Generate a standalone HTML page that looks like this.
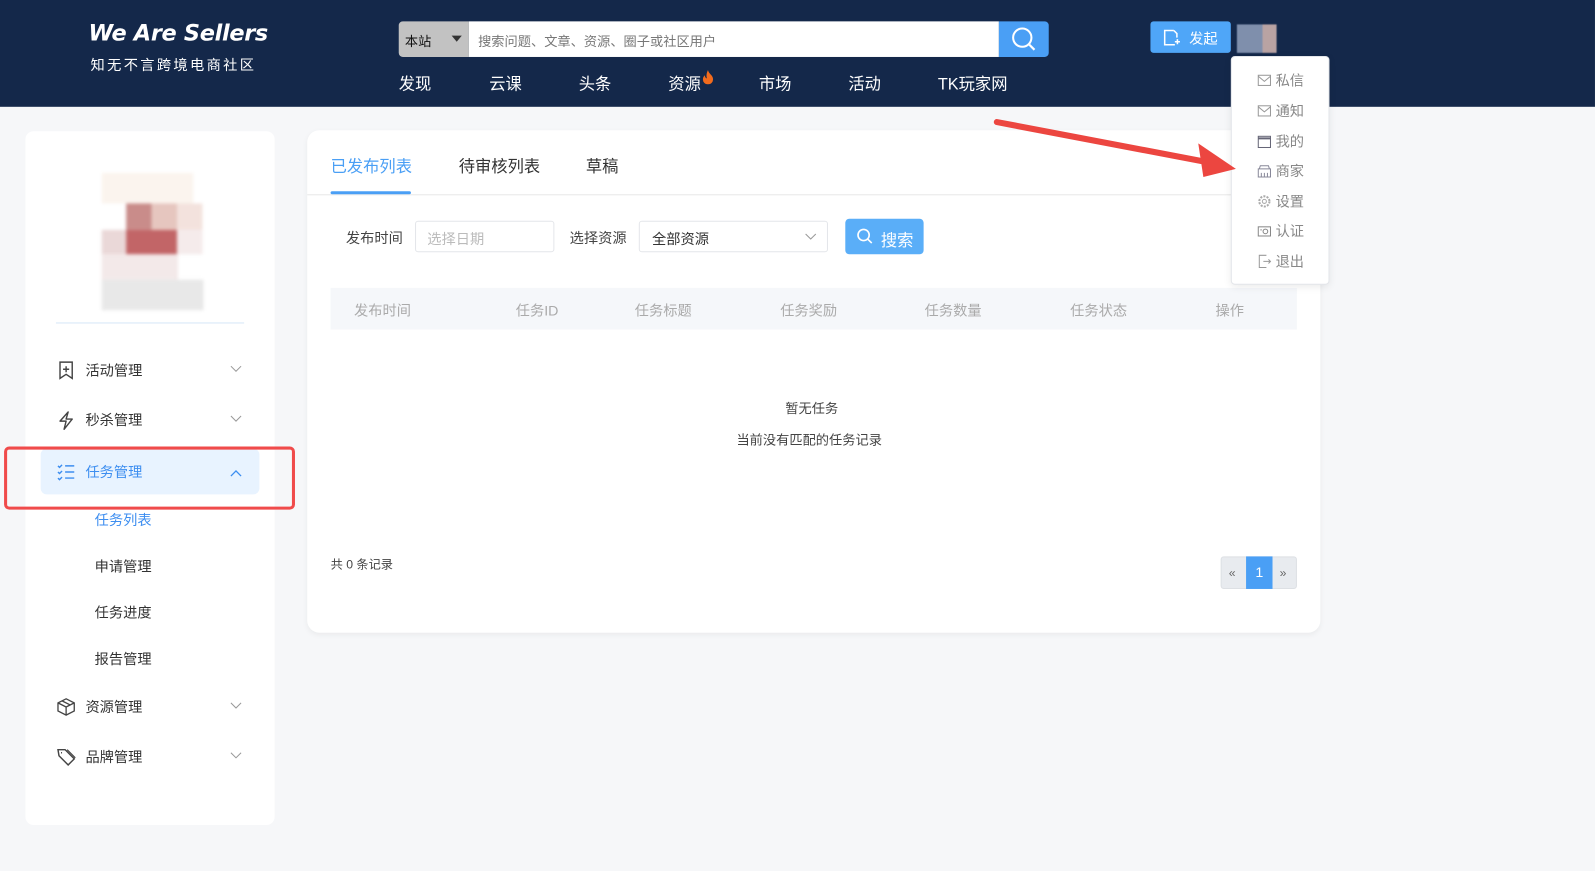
<!DOCTYPE html>
<html><head><meta charset="utf-8">
<style>
*{margin:0;padding:0;box-sizing:border-box}
html,body{width:1595px;height:871px;overflow:hidden;background:#f6f7f9}
body{font-family:"Liberation Sans","Noto Sans CJK SC",sans-serif;color:#333}
#w{position:absolute;left:0;top:0;width:1568px;height:856px;transform:scale(1.0172);transform-origin:0 0;background:#f6f7f9}
.a{position:absolute;white-space:nowrap}
.hdr{position:absolute;left:0;top:0;width:1568px;height:105px;background:#14284a}
.nav{font-size:16px;color:#fff;top:69px}
.dd{position:absolute;left:1210px;top:55px;width:97px;height:225px;background:#fff;border:1px solid #e4e6ea;border-radius:4px;box-shadow:0 2px 8px rgba(0,0,0,.08)}
.di{position:absolute;left:25px;font-size:14px;color:#888;display:flex;align-items:center;gap:4px}
.di svg{width:14px;height:14px}
.card{position:absolute;background:#fff}
.mi{position:absolute;left:55px;font-size:14px;color:#333;display:flex;align-items:center}
.mi svg{width:20px;height:20px;margin-right:9px}
.chev{position:absolute;left:226px;width:12px;height:12px}
.sub{position:absolute;left:93px;font-size:14px;color:#333}
.th{position:absolute;top:295px;font-size:14px;color:#aaa}
</style></head><body><div id="w">
<div class="hdr"></div>
<div class="a" style="left:87px;top:21px;font-family:'DejaVu Sans',sans-serif;font-style:italic;font-weight:bold;font-size:22px;color:#fff;letter-spacing:-0.3px">We Are Sellers</div>
<div class="a" style="left:89px;top:54px;font-size:14px;color:#fff;letter-spacing:2.3px">知无不言跨境电商社区</div>
<div class="a" style="left:392px;top:21px;width:69px;height:35px;background:#c2c2c2;border-radius:4px 0 0 4px;font-size:13px;color:#111;padding:9px 0 0 6px">本站<span style="position:absolute;left:52px;top:14px;border:5px solid transparent;border-top:6px solid #333;border-bottom:0"></span></div>
<div class="a" style="left:461px;top:21px;width:521px;height:35px;background:#fff;font-size:13px;color:#777;padding:9px 0 0 9px">搜索问题、文章、资源、圈子或社区用户</div>
<div class="a" style="left:982px;top:21px;width:49px;height:35px;background:#4a9ff5;border-radius:0 4px 4px 0"><svg width="49" height="35"><circle cx="23" cy="16" r="9" fill="none" stroke="#fff" stroke-width="2"/><line x1="30" y1="23" x2="35" y2="28" stroke="#fff" stroke-width="2.2"/></svg></div>
<div class="a nav" style="left:392px">发现</div><div class="a nav" style="left:481px">云课</div><div class="a nav" style="left:569px">头条</div>
<div class="a nav" style="left:657px">资源<svg width="12" height="14" style="position:absolute;left:33px;top:0"><path d="M6 0C7 4 11 5 11 9a5 5 0 0 1-10 0c0-2 1-3 2-4 0 2 1 3 2 3C4 5 5 2 6 0z" fill="#f26b1d"/></svg></div>
<div class="a nav" style="left:746px">市场</div><div class="a nav" style="left:834px">活动</div><div class="a nav" style="left:922px">TK玩家网</div>
<div class="a" style="left:1131px;top:21px;width:79px;height:31px;background:#4fa6f8;border-radius:3px;color:#fff;font-size:14px;padding:7px 0 0 38px">发起<svg width="18" height="18" style="position:absolute;left:12px;top:7px"><path d="M11 2H2v14h10" fill="none" stroke="#fff" stroke-width="1.5"/><path d="M11 2l3 3v4M12 13h5M14.5 10.5v5" fill="none" stroke="#fff" stroke-width="1.5"/></svg></div>
<div class="a" style="left:1216px;top:24px;width:39px;height:28px;background:linear-gradient(90deg,#7f8fac 0,#7f8fac 65%,#b9a3a3 65%);filter:blur(.5px)"></div>

<div class="card" style="left:25px;top:129px;width:245px;height:682px;border-radius:8px"></div>
<div class="a" style="left:80px;top:170px;width:155px;height:145px;filter:blur(1.5px)">
<div class="a" style="left:20px;top:0;width:90px;height:30px;background:#fbf4ee"></div>
<div class="a" style="left:44px;top:30px;width:25px;height:26px;background:#c98c8a"></div>
<div class="a" style="left:69px;top:30px;width:25px;height:26px;background:#e6c6bf"></div>
<div class="a" style="left:94px;top:30px;width:25px;height:26px;background:#f3e2dd"></div>
<div class="a" style="left:20px;top:56px;width:24px;height:24px;background:#ead8d8"></div>
<div class="a" style="left:44px;top:56px;width:50px;height:24px;background:#c26567"></div>
<div class="a" style="left:94px;top:56px;width:25px;height:24px;background:#f5ebeb"></div>
<div class="a" style="left:20px;top:80px;width:75px;height:25px;background:#f3e9e9"></div>
<div class="a" style="left:20px;top:105px;width:100px;height:30px;background:#e8e8e8"></div>
</div>
<div class="a" style="left:55px;top:317px;width:185px;height:1px;background:#d6e6f7"></div>
<div class="mi" style="top:354px"><svg viewBox="0 0 20 20"><path d="M4 2h12v16l-6-4-6 4z" fill="none" stroke="#444" stroke-width="1.4"/><path d="M10 6v6M7 9h6" stroke="#444" stroke-width="1.4"/></svg>活动管理</div>
<svg class="chev" style="top:356px" viewBox="0 0 12 12"><path d="M1 4l5 5 5-5" fill="none" stroke="#999"/></svg>
<div class="mi" style="top:403px"><svg viewBox="0 0 20 20"><path d="M12 2L4 11h6l-2 8 8-10h-6z" fill="none" stroke="#444" stroke-width="1.4" stroke-linejoin="round"/></svg>秒杀管理</div>
<svg class="chev" style="top:405px" viewBox="0 0 12 12"><path d="M1 4l5 5 5-5" fill="none" stroke="#999"/></svg>
<div class="a" style="left:40px;top:441px;width:215px;height:45px;background:#e8f3ff;border-radius:6px"></div>
<div class="a" style="left:4px;top:439px;width:286px;height:62px;border:3px solid #f04b4b;border-radius:5px"></div>
<div class="mi" style="top:454px;color:#3d8ef0"><svg viewBox="0 0 20 20"><path d="M2 4l1.5 1.5L6 3M2 10l1.5 1.5L6 9M2 16l1.5 1.5L6 15M9 4h9M9 10h9M9 16h9" fill="none" stroke="#3d8ef0" stroke-width="1.4"/></svg>任务管理</div>
<svg class="chev" style="top:460px" viewBox="0 0 12 12"><path d="M1 8l5-5 5 5" fill="none" stroke="#3d8ef0" stroke-width="1.3"/></svg>
<div class="sub" style="top:501px;color:#3d8ef0">任务列表</div>
<div class="sub" style="top:547px">申请管理</div>
<div class="sub" style="top:592px">任务进度</div>
<div class="sub" style="top:638px">报告管理</div>
<div class="mi" style="top:685px"><svg viewBox="0 0 20 20"><path d="M10 2l8 4v8l-8 4-8-4V6zM2 6l8 4 8-4M10 10v8M6 4l8 4" fill="none" stroke="#444" stroke-width="1.3"/></svg>资源管理</div>
<svg class="chev" style="top:687px" viewBox="0 0 12 12"><path d="M1 4l5 5 5-5" fill="none" stroke="#999"/></svg>
<div class="mi" style="top:734px"><svg viewBox="0 0 20 20"><path d="M2 3h7l9 9-6 6-9-9zM5 6h1" fill="none" stroke="#444" stroke-width="1.4"/><path d="M11 3l8 8" fill="none" stroke="#444" stroke-width="1.2"/></svg>品牌管理</div>
<svg class="chev" style="top:736px" viewBox="0 0 12 12"><path d="M1 4l5 5 5-5" fill="none" stroke="#999"/></svg>

<div class="card" style="left:302px;top:128px;width:996px;height:494px;border-radius:12px;box-shadow:0 2px 6px rgba(0,0,0,.05)"></div>
<div class="a" style="left:325px;top:150px;font-size:16px;color:#4a9ff5">已发布列表</div>
<div class="a" style="left:451px;top:150px;font-size:16px;color:#333">待审核列表</div>
<div class="a" style="left:576px;top:150px;font-size:16px;color:#333">草稿</div>
<div class="a" style="left:302px;top:191px;width:996px;height:1px;background:#e8e8e8"></div>
<div class="a" style="left:325px;top:188px;width:79px;height:3px;background:#4a9ff5;border-radius:2px"></div>
<div class="a" style="left:340px;top:224px;font-size:14px;color:#444">发布时间</div>
<div class="a" style="left:408px;top:217px;width:137px;height:31px;border:1px solid #e4e6ea;border-radius:3px;font-size:14px;color:#bbb;padding:7px 0 0 11px">选择日期</div>
<div class="a" style="left:560px;top:224px;font-size:14px;color:#444">选择资源</div>
<div class="a" style="left:628px;top:217px;width:186px;height:31px;border:1px solid #e4e6ea;border-radius:3px;font-size:14px;color:#333;padding:7px 0 0 12px">全部资源<svg width="12" height="12" style="position:absolute;left:162px;top:8px"><path d="M1 4l5 5 5-5" fill="none" stroke="#999"/></svg></div>
<div class="a" style="left:831px;top:215px;width:77px;height:35px;background:#5aaef8;border-radius:4px;color:#fff;font-size:16px;padding:8px 0 0 35px"><svg width="18" height="18" style="position:absolute;left:11px;top:9px"><circle cx="7" cy="7" r="5.5" fill="none" stroke="#fff" stroke-width="1.6"/><line x1="11" y1="11" x2="15" y2="15" stroke="#fff" stroke-width="1.6"/></svg>搜索</div>
<div class="a" style="left:325px;top:283px;width:950px;height:41px;background:#f5f7fa"></div>
<div class="th" style="left:348px">发布时间</div><div class="th" style="left:507px">任务ID</div><div class="th" style="left:624px">任务标题</div><div class="th" style="left:767px">任务奖励</div><div class="th" style="left:909px">任务数量</div><div class="th" style="left:1052px">任务状态</div><div class="th" style="left:1195px">操作</div>
<div class="a" style="left:772px;top:391px;font-size:13px;color:#444">暂无任务</div>
<div class="a" style="left:724px;top:422px;font-size:13px;color:#444">当前没有匹配的任务记录</div>
<div class="a" style="left:325px;top:546px;font-size:12px;color:#444">共 0 条记录</div>
<div class="a" style="left:1200px;top:547px;width:75px;height:32px;background:#e8ebef;border:1px solid #dde0e4;border-radius:3px;font-size:12px;color:#666"><span class="a" style="left:7px;top:8px">«</span><div class="a" style="left:24px;top:-1px;width:26px;height:32px;background:#4a9ff5;color:#fff;font-size:14px;text-align:center;padding-top:7px">1</div><span class="a" style="left:57px;top:8px">»</span></div>

<div class="dd">
<div class="di" style="top:13px"><svg viewBox="0 0 14 14"><rect x="1" y="2" width="12" height="10" fill="none" stroke="#999"/><path d="M1 3l6 5 6-5" fill="none" stroke="#999"/></svg>私信</div>
<div class="di" style="top:43px"><svg viewBox="0 0 14 14"><rect x="1" y="2" width="12" height="10" fill="none" stroke="#999"/><path d="M1 3l6 5 6-5" fill="none" stroke="#999"/></svg>通知</div>
<div class="di" style="top:73px"><svg viewBox="0 0 14 14"><rect x="1" y="2" width="12" height="11" fill="none" stroke="#667"/><line x1="1" y1="4" x2="13" y2="4" stroke="#667" stroke-width="2"/></svg>我的</div>
<div class="di" style="top:102px"><svg viewBox="0 0 14 14"><path d="M1 5h12v8H1zM2 5l1-3h8l1 3M4 9v4M7 9v4M10 9v4" fill="none" stroke="#889"/></svg>商家</div>
<div class="di" style="top:132px"><svg viewBox="0 0 14 14"><circle cx="7" cy="7" r="5" fill="none" stroke="#aaa" stroke-width="2" stroke-dasharray="2 1.2"/><circle cx="7" cy="7" r="2" fill="none" stroke="#aaa"/></svg>设置</div>
<div class="di" style="top:161px"><svg viewBox="0 0 14 14"><rect x="1" y="3" width="12" height="9" fill="none" stroke="#888"/><circle cx="8" cy="7.5" r="2.3" fill="none" stroke="#888"/><line x1="3" y1="6" x2="4.5" y2="6" stroke="#888"/></svg>认证</div>
<div class="di" style="top:191px"><svg viewBox="0 0 14 14"><path d="M9 1H2v12h7M6 7h7M11 5l2 2-2 2" fill="none" stroke="#999"/></svg>退出</div>
</div>
<svg class="a" style="left:970px;top:110px" width="250" height="70"><line x1="10" y1="10" x2="220" y2="50" stroke="#ec4640" stroke-width="6" stroke-linecap="round"/><path d="M245 56L208 31 213 64z" fill="#ec4640"/></svg>
</div></body></html>
